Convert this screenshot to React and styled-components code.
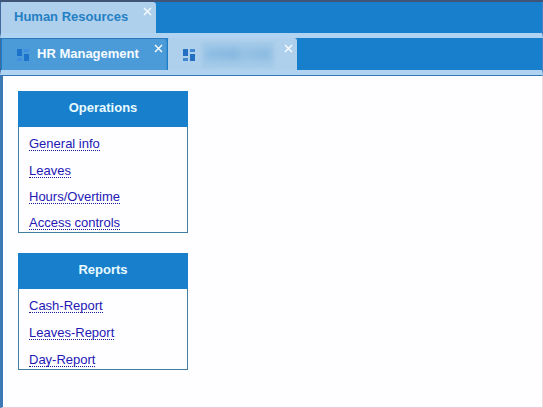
import React from 'react';
import styled, { createGlobalStyle } from 'styled-components';

const GlobalStyle = createGlobalStyle`
  * { box-sizing: border-box; }
  body { margin: 0; overflow: hidden; font-family: "Liberation Sans", Arial, sans-serif; }
`;

const Window = styled.div`
  width: 543px;
  height: 408px;
  display: flex;
  flex-direction: column;
  background: #fefdff;
  border-top: 2px solid #405478;
`;

const TabBar = styled.nav`
  display: flex;
  flex: none;
  height: ${(p) => p.$height}px;
  padding-left: ${(p) => p.$inset}px;
  background: #187fcd;
  border-bottom: 5px solid #afd3f0;
  border-left: 1px solid #42699b;
  border-right: 1px solid #4b7fc0;
`;

const Tab = styled.div`
  display: flex;
  align-items: flex-start;
  width: ${(p) => p.$width}px;
  margin-right: 1px;
  padding: 0 4px 0 ${(p) => p.$pad}px;
  background: ${(p) => (p.$active ? '#aed0ec' : '#4c9bd9')};
  color: ${(p) => (p.$active ? '#257fc3' : '#f6fcff')};
  border-radius: 1px 3px 0 0;
  box-shadow: ${(p) => (p.$active ? 'none' : 'inset 0 1px #2b79bd, inset -1px 0 #438fce')};
`;

const TabTitle = styled.span`
  flex: 1;
  font-size: 13px;
  font-weight: 700;
  line-height: 15px;
  margin-top: ${(p) => p.$top}px;
  white-space: nowrap;
`;

const HiddenTitle = styled.span`
  width: 72px;
  height: 26px;
  margin: 4px auto 0 7px;
  padding: 6px 3px;
  background: #a4cae9;
  filter: blur(1.5px);

  &::before {
    content: '';
    display: block;
    height: 12px;
    background: linear-gradient(90deg, #8fbee4, #86b7df 48%, #97c2e5 55%, #88b9e0);
    filter: blur(3px);
  }
`;

const GridIcon = styled.svg`
  flex: none;
  width: 12px;
  height: 12px;
  margin: 11px ${(p) => p.$gap}px 0 0;
`;

const CloseIcon = styled.svg`
  flex: none;
  width: 9px;
  height: 9px;
  margin-top: ${(p) => p.$top}px;
`;

const Content = styled.main`
  flex: 1;
  display: flex;
  flex-direction: column;
  align-items: flex-start;
  gap: 20px;
  padding: 15px 0 0 15px;
  border-top: 1px solid #3177b9;
  border-left: 3px solid #3b78b4;
  border-right: 1px solid #f5d8df;
  border-bottom: 1px solid #edccd5;
`;

const Panel = styled.section`
  width: 170px;
  height: ${(p) => p.$height}px;
  border: 1px solid #417e9f;
`;

const PanelTitle = styled.h2`
  margin: -1px -1px 0;
  height: 36px;
  background: #187fcd;
  color: #e9fbff;
  font-size: 13px;
  line-height: 33px;
  text-align: center;
`;

const LinkList = styled.ul`
  list-style: none;
  margin: 0;
  padding: 9.3px 0 0 10px;
`;

const LinkItem = styled.li`
  height: ${(p) => p.$pitch}px;
  font-size: 13px;
  line-height: 15px;
`;

const PanelLink = styled.a`
  display: inline-block;
  height: 15px;
  color: #2318b5;
  text-decoration: none;
  white-space: nowrap;
  border-bottom: 1px dotted #181894;
`;

function Dashboard({ gap, dim }) {
  return (
    <GridIcon $gap={gap} viewBox="0 0 12 12">
      <path fill={dim ? '#1d73cb' : '#2270bf'} d="M0 0h5v7H0zM7 5h5v7H7z" />
      <path fill={dim ? '#3f8fe0' : '#4189cf'} d="M7 0h5v3H7zM0 9h5v3H0z" />
    </GridIcon>
  );
}

function Close({ top }) {
  return (
    <CloseIcon $top={top} viewBox="0 0 9 9">
      <path d="M1 1l7 7M8 1L1 8" stroke="#f9fdff" strokeWidth="1.4" fill="none" />
    </CloseIcon>
  );
}

function LinkPanel({ title, links, height, pitch }) {
  return (
    <Panel $height={height}>
      <PanelTitle>{title}</PanelTitle>
      <LinkList>
        {links.map((label) => (
          <LinkItem key={label} $pitch={pitch}>
            <PanelLink href="#">{label}</PanelLink>
          </LinkItem>
        ))}
      </LinkList>
    </Panel>
  );
}

export default function App() {
  return (
    <>
      <GlobalStyle />
      <Window>
        <TabBar $height={36} $inset={0}>
          <Tab $active $width={155} $pad={13}>
            <TabTitle $top={7}>Human Resources</TabTitle>
            <Close top={5} />
          </Tab>
        </TabBar>
        <TabBar $height={37} $inset={1}>
          <Tab $width={165} $pad={15}>
            <Dashboard gap={8} dim />
            <TabTitle $top={8}>HR Management</TabTitle>
            <Close top={6} />
          </Tab>
          <Tab $active $width={129} $pad={15}>
            <Dashboard gap={0} />
            <HiddenTitle />
            <Close top={6} />
          </Tab>
        </TabBar>
        <Content>
          <LinkPanel
            title="Operations"
            height={142}
            pitch={26.35}
            links={['General info', 'Leaves', 'Hours/Overtime', 'Access controls']}
          />
          <LinkPanel
            title="Reports"
            height={117}
            pitch={26.7}
            links={['Cash-Report', 'Leaves-Report', 'Day-Report']}
          />
        </Content>
      </Window>
    </>
  );
}
